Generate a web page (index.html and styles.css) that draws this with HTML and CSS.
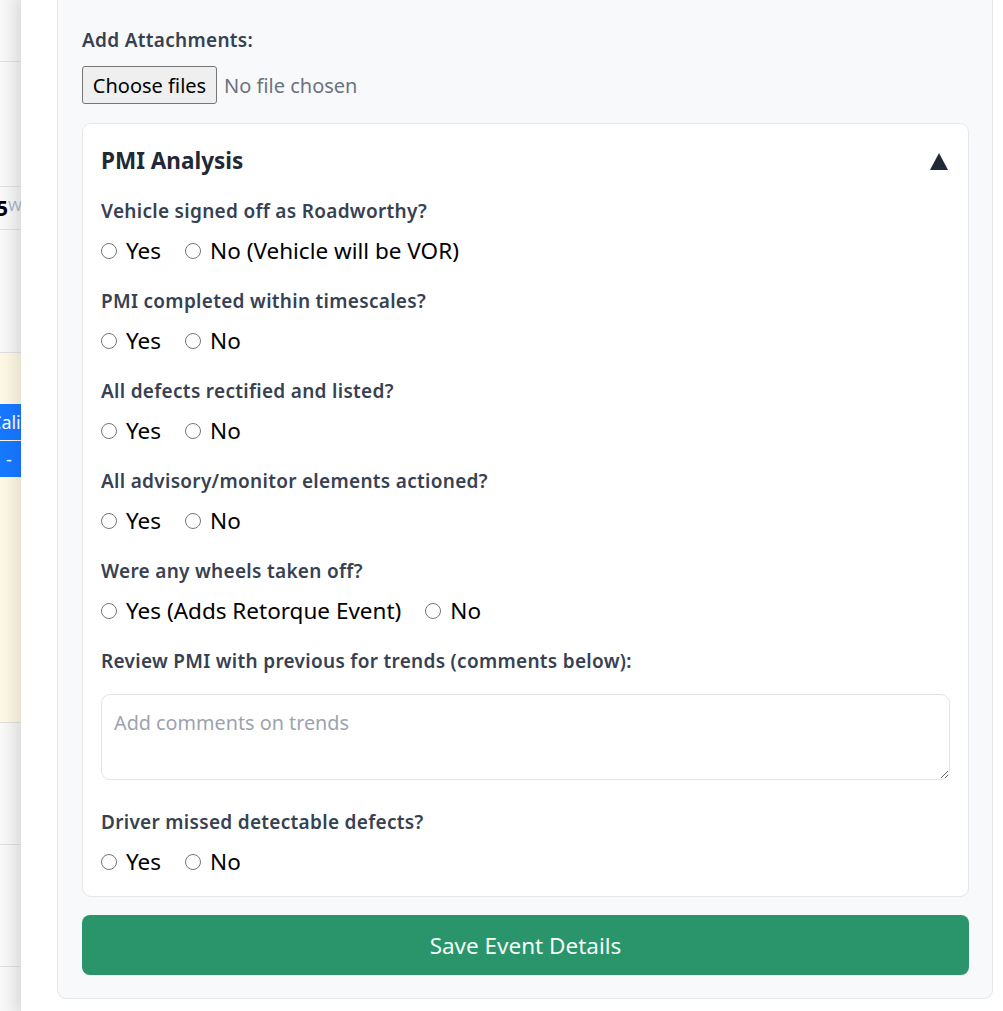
FILE: index.html
```html
<!DOCTYPE html>
<html lang="en">
<head>
	<meta charset="UTF-8" />
	<meta name="viewport" content="width=device-width, initial-scale=1.0" />
	<title>Event Details</title>
	<link rel="stylesheet" href="styles.css">
</head>
<body>
<div class="screen">
	<!-- list page left behind the drawer -->
	<div class="behind">
		<div class="row r-top"></div>
		<div class="row r-tall"></div>
		<div class="row r-reg"><b>5</b><span>W</span></div>
		<div class="row r-tall r-short"></div>
		<div class="row r-warn">
			<span class="act">Cali</span>
			<span class="act">-</span>
		</div>
		<div class="row r-tall"></div>
		<div class="row r-tall"></div>
		<div class="row"></div>
	</div>

	<div class="drawer">
		<form class="event-form">
			<label class="field-label">Add Attachments:</label>
			<div class="file-row">
				<button type="button" class="file-btn">Choose files</button>
				<span class="file-none">No file chosen</span>
			</div>

			<section class="pmi">
				<div class="pmi-head">
					<h2>PMI Analysis</h2>
					<svg class="caret" width="18" height="17" viewBox="0 0 18 17"><polygon points="9,0 18,17 0,17" fill="#1f2937"/></svg>
				</div>

				<div class="q">
					<div class="field-label">Vehicle signed off as Roadworthy?</div>
					<div class="opts">
						<label class="opt"><input type="radio" name="roadworthy"> Yes</label>
						<label class="opt"><input type="radio" name="roadworthy"> No (Vehicle will be VOR)</label>
					</div>
				</div>
				<div class="q">
					<div class="field-label">PMI completed within timescales?</div>
					<div class="opts">
						<label class="opt"><input type="radio" name="timescales"> Yes</label>
						<label class="opt"><input type="radio" name="timescales"> No</label>
					</div>
				</div>
				<div class="q">
					<div class="field-label">All defects rectified and listed?</div>
					<div class="opts">
						<label class="opt"><input type="radio" name="defects"> Yes</label>
						<label class="opt"><input type="radio" name="defects"> No</label>
					</div>
				</div>
				<div class="q">
					<div class="field-label">All advisory/monitor elements actioned?</div>
					<div class="opts">
						<label class="opt"><input type="radio" name="advisory"> Yes</label>
						<label class="opt"><input type="radio" name="advisory"> No</label>
					</div>
				</div>
				<div class="q">
					<div class="field-label">Were any wheels taken off?</div>
					<div class="opts">
						<label class="opt"><input type="radio" name="wheels"> Yes (Adds Retorque Event)</label>
						<label class="opt"><input type="radio" name="wheels"> No</label>
					</div>
				</div>
				<div class="q q-text">
					<div class="field-label">Review PMI with previous for trends (comments below):</div>
					<textarea class="trends" placeholder="Add comments on trends"></textarea>
				</div>
				<div class="q">
					<div class="field-label">Driver missed detectable defects?</div>
					<div class="opts">
						<label class="opt"><input type="radio" name="driver"> Yes</label>
						<label class="opt"><input type="radio" name="driver"> No</label>
					</div>
				</div>
			</section>

			<button type="button" class="save">Save Event Details</button>
		</form>
	</div>
</div>
</body>
</html>
```

FILE: styles.css
```css
html, body {
	margin: 0;
	height: 100%;
	overflow: hidden;
	background: #fff;
	font-family: "Noto Sans", "Open Sans", sans-serif;
}
.screen {
	display: flex;
	height: 1011px;
}

/* page behind the drawer */
.behind {
	width: 21px;
	flex: none;
	overflow: hidden;
	background: linear-gradient(to right, #f9f9f9, #ececec);
	display: flex;
	flex-direction: column;
}
.behind .row {
	border-bottom: 1px solid #dcdcdc;
	flex: none;
	position: relative;
}
.behind .row:last-child {
	flex: 1;
	border-bottom: 0;
}
.r-top { height: 61px; }
.r-tall { height: 121px; }
.behind .r-tall:nth-child(2) { height: 124px; }
.r-short { height: 122px; }
.r-reg {
	height: 42px;
	display: flex;
	align-items: center;
	font-size: 21px;
	line-height: 1;
	white-space: nowrap;
}
.r-reg b {
	margin-left: -4px;
	color: #000;
}
.r-reg span {
	color: #9fb0cc;
	font-size: 15px;
	margin-top: -6px;
}
.r-warn {
	height: 370px;
	background: linear-gradient(to right, #fdf7e4, #f5efdd);
	padding-top: 51px;
	box-sizing: border-box;
	display: flex;
	flex-direction: column;
	gap: 1px;
}
.r-warn .act {
	height: 36px;
	background: #1677ff;
	color: #fff;
	font-size: 18px;
	line-height: 36px;
	white-space: nowrap;
	text-indent: -10px;
}
.r-warn .act + .act {
	text-indent: 6px;
}

/* drawer */
.drawer {
	flex: 1;
	background: #fff;
	position: relative;
	z-index: 1;
	box-shadow: -5px 0 14px rgba(0, 0, 0, 0.07);
	padding: 0 10px 0 36px;
}
.event-form {
	background: #f8f9fb;
	border: 1px solid #e5e7eb;
	border-top: 0;
	border-radius: 0 0 9px 9px;
	padding: 27px 23px 23px 24px;
}
.field-label {
	display: block;
	font-size: 19px;
	letter-spacing: 0.3px;
	line-height: 27px;
	font-weight: 600;
	color: #374151;
	margin-bottom: 11px;
}
.event-form > .field-label {
	margin-bottom: 12px;
}
.file-row {
	display: flex;
	align-items: center;
	gap: 7px;
	margin-bottom: 19px;
}
.file-btn {
	height: 38px;
	width: 135px;
	background: #efefef;
	border: 1px solid #767676;
	border-radius: 3px;
	font-family: inherit;
	font-size: 20px;
	color: #000;
	padding: 0;
}
.file-none {
	font-size: 20px;
	color: #6b7280;
}

.pmi {
	background: #fff;
	border: 1px solid #e5e7eb;
	border-radius: 9px;
	padding: 22px 18px 19px 18px;
}
.pmi-head {
	display: flex;
	justify-content: space-between;
	align-items: center;
	margin-bottom: 22px;
}
.pmi-head h2 {
	margin: 0;
	font-size: 22.5px;
	line-height: 30px;
	font-weight: 700;
	color: #1f2937;
}
.caret {
	margin-right: 2px;
	margin-top: 1px;
}
.q {
	margin-bottom: 22px;
}
.q:last-child {
	margin-bottom: 0;
}
.q-text {
	margin-bottom: 29px;
}
.opts {
	display: flex;
	gap: 24px;
}
.opt {
	display: flex;
	align-items: center;
	gap: 9px;
	font-size: 22.5px;
	line-height: 30px;
	color: #000;
}
.opt input {
	appearance: none;
	-webkit-appearance: none;
	width: 16px;
	height: 16px;
	margin: 0;
	border: 1px solid #767676;
	border-radius: 50%;
	background: #fff;
	box-sizing: border-box;
}
.trends {
	display: block;
	box-sizing: border-box;
	width: 100%;
	height: 86px;
	margin: 19px 0 0;
	padding: 14px 12px;
	border: 1px solid #e2e4e8;
	border-radius: 9px;
	font-family: inherit;
	font-size: 19.8px;
	line-height: 1.4;
	resize: vertical;
}
.trends::placeholder {
	color: #9ca3af;
}
.save {
	display: block;
	width: 100%;
	height: 60px;
	margin-top: 18px;
	background: #2a956b;
	color: #f4fbf7;
	border: 0;
	border-radius: 8px;
	font-family: inherit;
	font-size: 22.5px;
}
```
